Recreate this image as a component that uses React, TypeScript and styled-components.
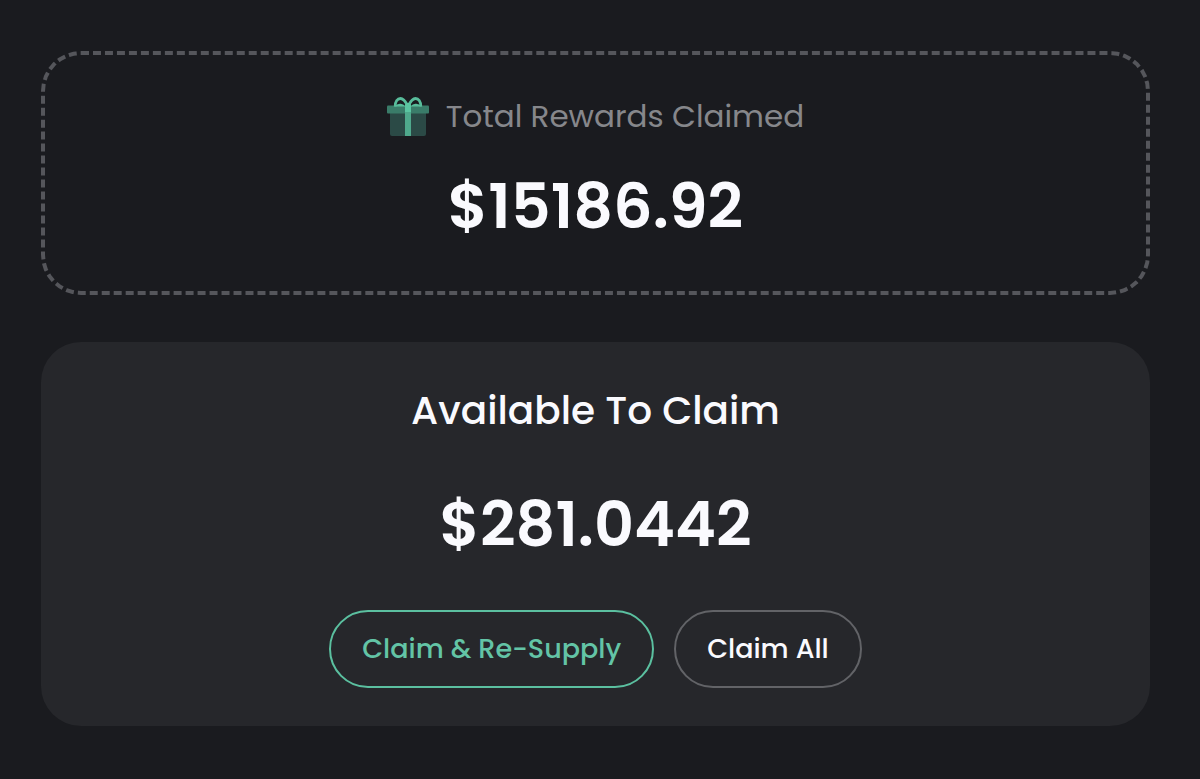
import React from "react";
import styled, { createGlobalStyle } from "styled-components";

const GlobalStyle = createGlobalStyle`
  *, *::before, *::after { box-sizing: border-box; }
  body {
    margin: 0;
    background: #1a1b1f;
    color: #fafafe;
    font-family: Poppins, Inter, sans-serif;
  }
`;

const Page = styled.main`
  display: flex;
  flex-direction: column;
  gap: 47px;
  padding: 51px 50px 52px 41px;
`;

const Card = styled.section<{ $outlined?: boolean }>`
  display: flex;
  flex-direction: column;
  align-items: center;
  padding: 38px;
  border-radius: 40px;
  background: ${(p) => (p.$outlined ? "transparent" : "#26272b")};
  border: ${(p) => (p.$outlined ? "4px dashed #55565b" : "none")};
`;

const Label = styled.h2`
  display: flex;
  align-items: center;
  gap: 17px;
  margin: 0 0 22px;
  font-size: 31px;
  line-height: 46px;
  font-weight: 400;
  color: #86878b;
`;

const Title = styled.h2`
  margin: 0 0 37px;
  font-size: 39px;
  line-height: 62px;
  font-weight: 500;
`;

const Amount = styled.p`
  margin: 0;
  font-size: 62px;
  line-height: 92px;
  font-weight: 600;
`;

const Actions = styled.div`
  display: flex;
  flex-wrap: wrap;
  justify-content: center;
  gap: 20px;
  margin-top: 39px;
`;

const PillButton = styled.button<{ $accent?: boolean }>`
  padding: 16px 31px;
  border: 2px solid ${(p) => (p.$accent ? "#5bc0a0" : "#626367")};
  border-radius: 40px;
  background: transparent;
  color: ${(p) => (p.$accent ? "#63c4a6" : "#fafafe")};
  font-family: inherit;
  font-size: 27px;
  line-height: 42px;
  font-weight: 500;
  cursor: pointer;
`;

const GiftIcon = () => (
  <svg width="42" height="42" viewBox="0 -1 42 42" aria-hidden="true">
    <path d="M3 16H39V38Q39 40 37 40H5Q3 40 3 38Z" fill="#2b4a46" />
    <rect y="9.5" width="42" height="8" rx="1" fill="#3a7c69" />
    <path
      d="M8.2 10.5C8.2 5.5 10.5 2.5 13.5 2.5C16.8 2.5 18.5 5.5 20.5 9.5M33.8 10.5C33.8 5.5 31.5 2.5 28.5 2.5C25.2 2.5 23.5 5.5 21.5 9.5"
      fill="none"
      stroke="#58bd9b"
      strokeWidth="2.8"
    />
    <path
      d="M7 10.5Q10 7.5 13.5 7.8Q16.5 8 18.5 10.5ZM35 10.5Q32 7.5 28.5 7.8Q25.5 8 23.5 10.5Z"
      fill="#58bd9b"
    />
    <path d="M18 8.5Q21 5 24 8.5V17H18Z" fill="#5bc5a1" />
    <path d="M18 16H24V40H18Z" fill="#4fa98c" />
  </svg>
);

export default function App() {
  return (
    <>
      <GlobalStyle />
      <Page>
        <Card $outlined>
          <Label>
            <GiftIcon />
            Total Rewards Claimed
          </Label>
          <Amount>$15186.92</Amount>
        </Card>
        <Card>
          <Title>Available To Claim</Title>
          <Amount>$281.0442</Amount>
          <Actions>
            <PillButton type="button" $accent>
              Claim &amp; Re-Supply
            </PillButton>
            <PillButton type="button">Claim All</PillButton>
          </Actions>
        </Card>
      </Page>
    </>
  );
}
